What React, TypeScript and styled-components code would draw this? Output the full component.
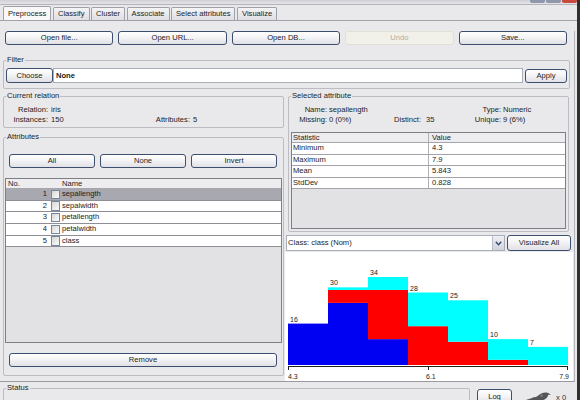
import React from 'react';
import styled, { createGlobalStyle } from 'styled-components';

const FONT = `'Liberation Sans', Arial, sans-serif`;

const GlobalStyle = createGlobalStyle`
  html, body { margin: 0; padding: 0; background: #e9e9eb; }
  * { box-sizing: border-box; }
`;

const Window = styled.div`
  width: 580px;
  height: 400px;
  overflow: hidden;
  background: #e9e9eb;
  border-right: 3px solid #2f2f33;
  font-family: ${FONT};
  font-size: 7.6px;
  color: #1c1c1c;
`;

const TitleStrip = styled.div`
  height: 5px;
  display: flex;
  justify-content: flex-end;
  align-items: flex-start;
  gap: 1px;
  background: linear-gradient(#cfd0d6, #e4e4e8);
  border-bottom: 1px solid #b4b4ba;
`;

const WinButton = styled.span<{ $red?: boolean }>`
  width: 15px;
  height: 3px;
  border-radius: 0 0 2px 2px;
  background: ${p => (p.$red ? '#c9493c' : '#8f97ab')};
`;

const TabStrip = styled.div`
  height: 16px;
  display: flex;
  align-items: flex-end;
  gap: 1.5px;
  padding-left: 3px;
  border-bottom: 1px solid #a2a2a8;
`;

const Tab = styled.div<{ $active?: boolean }>`
  height: ${p => (p.$active ? 14 : 13)}px;
  line-height: ${p => (p.$active ? 13 : 12)}px;
  padding: 0 4px;
  border: 1px solid #a0a0a8;
  border-bottom: none;
  border-radius: 2px 2px 0 0;
  white-space: nowrap;
  background: ${p => (p.$active ? '#f8f8f8' : 'linear-gradient(#f4f4f6, #dfdfe3)')};
`;

const Panel = styled.div`
  width: 575px;
  padding: 0 1px 0 3px;
  border-right: 1px solid #b4b4ba;
  border-bottom: 1px solid #9a9aa0;
`;

const ButtonRow = styled.div`
  display: grid;
  grid-template-columns: repeat(5, 1fr);
  column-gap: 5px;
  margin: 10px 6px 0 2px;
`;

const Button = styled.button<{ $w?: number; $h?: number; $disabled?: boolean }>`
  ${p => (p.$w ? `width: ${p.$w}px; flex: none;` : '')}
  height: ${p => p.$h ?? 14}px;
  padding: 0;
  margin: 0;
  font: inherit;
  color: ${p => (p.$disabled ? '#b2aea2' : '#1c1c1c')};
  border: 1px solid ${p => (p.$disabled ? '#e0e0d6' : '#3d4f6e')};
  border-radius: 3px;
  background: ${p =>
    p.$disabled ? '#f1f1e9' : 'linear-gradient(#ffffff 0%, #f4f4f6 45%, #e0e0e6 100%)'};
  line-height: ${p => (p.$h ?? 14) - 2}px;
  text-align: center;
  white-space: nowrap;
`;

const LogButton = styled(Button)`
  margin: 6px 0 0 7px;
`;

const Group = styled.fieldset`
  margin: 0;
  padding: 0 2px;
  min-width: 0;
  border: 1px solid #bcbcc2;
  border-radius: 2px;
`;

const Legend = styled.legend`
  padding: 0 1px;
  margin: 0;
  height: 10px;
  line-height: 10px;
  font-size: 7.6px;
`;

const FilterGroup = styled(Group)`
  margin: 10px 3px 0 0;
  padding: 3px 2px 5px 2px;
`;

const FilterRow = styled.div`
  display: flex;
  align-items: center;
`;

const FilterField = styled.div`
  flex: 1;
  height: 15px;
  background: #fff;
  border: 1px solid #a8afb8;
  font-weight: bold;
  line-height: 13px;
  padding-left: 2px;
  margin-right: 2px;
`;

const Columns = styled.div`
  display: grid;
  grid-template-columns: 281px 1fr;
  column-gap: 1px;
  margin-top: 2px;
  align-items: start;
`;

const Column = styled.div`
  display: flex;
  flex-direction: column;
`;

const RelationGroup = styled(Group)`
  padding: 4px 2px 2px 2px;
`;

const AttributesGroup = styled(Group)`
  margin-top: 4px;
  padding: 12px 2px 8px 2px;
`;

const SelectedGroup = styled(Group)`
  margin: 0 4px 0 3px;
  padding: 4px 2px 2px 2px;
`;

const InfoGrid = styled.div<{ $cols: string; $gap: number }>`
  display: grid;
  grid-template-columns: ${p => p.$cols};
  column-gap: ${p => p.$gap}px;
  line-height: 10px;
  white-space: nowrap;
`;

const InfoText = styled.span<{ $align?: 'left' | 'right' }>`
  text-align: ${p => p.$align ?? 'left'};
`;

const SelectButtons = styled.div`
  display: grid;
  grid-template-columns: repeat(3, 1fr);
  column-gap: 5px;
  margin: 0 4px 0 3px;
`;

const AttrTable = styled.div`
  margin: 10px -1px 0 -1px;
  height: 165px;
  border: 1px solid #7e7e86;
  background: #e2e2e5;
  overflow: hidden;
`;

const AttrHeader = styled.div`
  display: grid;
  grid-template-columns: 44px 11px 1fr;
  height: 10px;
  line-height: 9px;
  background: #ededef;
  border-bottom: 1px solid #a6a6ac;
`;

const HeadCell = styled.span<{ $pad?: number }>`
  padding-left: ${p => p.$pad ?? 1}px;
`;

const AttrRow = styled.div<{ $selected?: boolean }>`
  display: grid;
  grid-template-columns: 44px 11px 1fr;
  height: 11.7px;
  line-height: 10.7px;
  background: ${p => (p.$selected ? '#a8a8b0' : '#ffffff')};
  border-bottom: 1px solid #8e8e94;
`;

const NumCell = styled.span`
  text-align: right;
  padding-right: 3px;
`;

const CheckCell = styled.span`
  display: flex;
  align-items: center;
  padding-left: 1px;
`;

const CheckBox = styled.span`
  display: block;
  width: 9px;
  height: 9.5px;
  border: 1px solid #7387a3;
  background: linear-gradient(135deg, #d8d9d6, #fafafa);
`;

const NameCell = styled.span`
  padding-left: 1px;
`;

const RemoveButtonRow = styled.div`
  display: flex;
  margin: 10px 4px 0 3px;
  & > button {
    flex: 1;
  }
`;

const StatsTable = styled.div`
  margin-top: 7px;
  height: 97px;
  border: 1px solid #7e7e86;
  background: #e2e2e5;
  overflow: hidden;
`;

const StatsRow = styled.div<{ $header?: boolean }>`
  display: grid;
  grid-template-columns: 137px 1fr;
  height: ${p => (p.$header ? 10 : 11.5)}px;
  line-height: ${p => (p.$header ? 9 : 10.5)}px;
  background: ${p => (p.$header ? '#ededef' : '#ffffff')};
  border-bottom: 1px solid ${p => (p.$header ? '#a6a6ac' : '#a2a2a8')};
`;

const StatsCell = styled.span<{ $first?: boolean }>`
  padding-left: ${p => (p.$first ? 1 : 3)}px;
  ${p => (p.$first ? 'border-right: 1px solid #b0b0b6;' : '')}
`;

const ClassRow = styled.div`
  display: flex;
  gap: 2px;
  height: 16px;
  margin: 3px 2px 0 1px;
`;

const ClassCombo = styled.div`
  flex: 1;
  display: flex;
  background: #fff;
  border: 1px solid #a8afb8;
`;

const ComboText = styled.span`
  flex: 1;
  padding-left: 1px;
  line-height: 14px;
`;

const ComboArrow = styled.span`
  width: 12px;
  display: flex;
  align-items: center;
  justify-content: center;
  background: linear-gradient(#eef0f4, #cfd3dc);
  border-left: 1px solid #b8bcc6;
`;

const Histogram = styled.div`
  margin-top: 1px;
  height: 129px;
  background: #ffffff;
`;

const StatusRow = styled.div`
  display: flex;
  align-items: flex-start;
  margin-top: 1px;
  padding-left: 3px;
`;

const StatusGroup = styled(Group)`
  width: 467px;
  height: 30px;
`;

const BirdArea = styled.div`
  display: flex;
  align-items: center;
  gap: 4px;
  margin: 9px 0 0 14px;
  color: #333;
`;

const BINS: [number, number, number][] = [
  [16, 0, 0],
  [24, 5, 1],
  [10, 19, 5],
  [0, 15, 13],
  [0, 9, 16],
  [0, 2, 8],
  [0, 0, 7],
];
const COLORS = ['#0000f2', '#ff0000', '#00ffff'];
const SCALE = 2.588;
const X0 = 3;
const BW = 40;
const BASE = 113;

function Chart() {
  return (
    <svg width="288" height="129" viewBox="0 0 288 129" style={{ display: 'block' }}>
      {BINS.map((bin, i) => {
        let y = BASE;
        const total = bin[0] + bin[1] + bin[2];
        const x = X0 + i * BW;
        const rects = bin.map((c, k) => {
          const h = c * SCALE;
          y -= h;
          return c > 0 ? <rect key={k} x={x} y={y} width={BW} height={h} fill={COLORS[k]} /> : null;
        });
        return (
          <g key={i}>
            {rects}
            <text x={x + 2} y={BASE - total * SCALE - 2} fontSize="7" fontFamily={FONT} fill="#222">
              {total}
            </text>
          </g>
        );
      })}
      <line x1="3" y1="114.5" x2="283" y2="114.5" stroke="#222" strokeWidth="1" />
      <line x1="3.5" y1="114" x2="3.5" y2="118" stroke="#222" strokeWidth="1" />
      <line x1="143.5" y1="114" x2="143.5" y2="118" stroke="#222" strokeWidth="1" />
      <line x1="282.5" y1="114" x2="282.5" y2="118" stroke="#222" strokeWidth="1" />
      <text x="3" y="127" fontSize="7" fontFamily={FONT} fill="#222">4.3</text>
      <text x="141" y="127" fontSize="7" fontFamily={FONT} fill="#222">6.1</text>
      <text x="284" y="127" fontSize="7" fontFamily={FONT} fill="#222" textAnchor="end">7.9</text>
    </svg>
  );
}

function Bird() {
  return (
    <svg width="26" height="10" viewBox="0 0 26 10">
      <path
        d="M0 8 C4 7 7 5 10 5 L13 3 C15 1 19 0 22 1 L25 2.5 L22 3 C22 6 18 9 12 9 C8 9 4 9 0 8 Z"
        fill="#555558"
      />
      <path d="M14 4 L16 2 L17 5 Z" fill="#888" />
    </svg>
  );
}

const TABS = ['Preprocess', 'Classify', 'Cluster', 'Associate', 'Select attributes', 'Visualize'];
const ATTRS = ['sepallength', 'sepalwidth', 'petallength', 'petalwidth', 'class'];
const STATS: [string, string][] = [
  ['Minimum', '4.3'],
  ['Maximum', '7.9'],
  ['Mean', '5.843'],
  ['StdDev', '0.828'],
];

export default function App() {
  return (
    <>
      <GlobalStyle />
      <Window>
        <TitleStrip>
          <WinButton />
          <WinButton />
          <WinButton $red />
        </TitleStrip>
        <TabStrip>
          {TABS.map((t, i) => (
            <Tab key={t} $active={i === 0}>
              {t}
            </Tab>
          ))}
        </TabStrip>
        <Panel>
          <ButtonRow>
            <Button>Open file...</Button>
            <Button>Open URL...</Button>
            <Button>Open DB...</Button>
            <Button $disabled>Undo</Button>
            <Button>Save...</Button>
          </ButtonRow>

          <FilterGroup>
            <Legend>Filter</Legend>
            <FilterRow>
              <Button $w={47} $h={15}>Choose</Button>
              <FilterField>None</FilterField>
              <Button $w={42}>Apply</Button>
            </FilterRow>
          </FilterGroup>

          <Columns>
            <Column>
              <RelationGroup>
                <Legend>Current relation</Legend>
                <InfoGrid $cols="42px 98px 38px 1fr" $gap={3}>
                  <InfoText $align="right">Relation:</InfoText>
                  <InfoText>iris</InfoText>
                  <InfoText />
                  <InfoText />
                  <InfoText $align="right">Instances:</InfoText>
                  <InfoText>150</InfoText>
                  <InfoText $align="right">Attributes:</InfoText>
                  <InfoText>5</InfoText>
                </InfoGrid>
              </RelationGroup>

              <AttributesGroup>
                <Legend>Attributes</Legend>
                <SelectButtons>
                  <Button>All</Button>
                  <Button>None</Button>
                  <Button>Invert</Button>
                </SelectButtons>
                <AttrTable>
                  <AttrHeader>
                    <HeadCell $pad={2}>No.</HeadCell>
                    <HeadCell />
                    <HeadCell>Name</HeadCell>
                  </AttrHeader>
                  {ATTRS.map((a, i) => (
                    <AttrRow key={a} $selected={i === 0}>
                      <NumCell>{i + 1}</NumCell>
                      <CheckCell>
                        <CheckBox />
                      </CheckCell>
                      <NameCell>{a}</NameCell>
                    </AttrRow>
                  ))}
                </AttrTable>
                <RemoveButtonRow>
                  <Button>Remove</Button>
                </RemoveButtonRow>
              </AttributesGroup>
            </Column>

            <Column>
              <SelectedGroup>
                <Legend>Selected attribute</Legend>
                <InfoGrid $cols="36px 63px 30px 46px 27px 1fr" $gap={2}>
                  <InfoText $align="right">Name:</InfoText>
                  <InfoText>sepallength</InfoText>
                  <InfoText />
                  <InfoText />
                  <InfoText $align="right">Type:</InfoText>
                  <InfoText>Numeric</InfoText>
                  <InfoText $align="right">Missing:</InfoText>
                  <InfoText>0 (0%)</InfoText>
                  <InfoText>Distinct:</InfoText>
                  <InfoText>35</InfoText>
                  <InfoText $align="right">Unique:</InfoText>
                  <InfoText>9 (6%)</InfoText>
                </InfoGrid>
                <StatsTable>
                  <StatsRow $header>
                    <StatsCell $first>Statistic</StatsCell>
                    <StatsCell>Value</StatsCell>
                  </StatsRow>
                  {STATS.map(([k, v]) => (
                    <StatsRow key={k}>
                      <StatsCell $first>{k}</StatsCell>
                      <StatsCell>{v}</StatsCell>
                    </StatsRow>
                  ))}
                </StatsTable>
              </SelectedGroup>

              <ClassRow>
                <ClassCombo>
                  <ComboText>Class: class (Nom)</ComboText>
                  <ComboArrow>
                    <svg width="7" height="5" viewBox="0 0 7 5">
                      <polyline points="0.8,0.8 3.5,3.8 6.2,0.8" fill="none" stroke="#3a4a6a" strokeWidth="1.4" />
                    </svg>
                  </ComboArrow>
                </ClassCombo>
                <Button $w={64} $h={16}>Visualize All</Button>
              </ClassRow>

              <Histogram>
                <Chart />
              </Histogram>
            </Column>
          </Columns>
        </Panel>

        <StatusRow>
          <StatusGroup>
            <Legend>Status</Legend>
          </StatusGroup>
          <LogButton $w={35} $h={16}>Log</LogButton>
          <BirdArea>
            <Bird />
            <span>x 0</span>
          </BirdArea>
        </StatusRow>
      </Window>
    </>
  );
}
